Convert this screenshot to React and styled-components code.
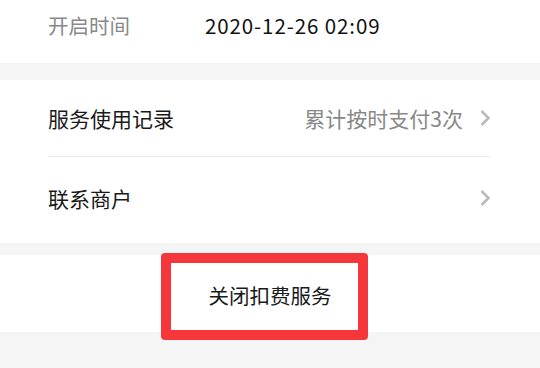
import React from "react";
import styled, { createGlobalStyle } from "styled-components";

const GlobalStyle = createGlobalStyle`
  html, body {
    margin: 0;
    padding: 0;
    background: #f5f5f5;
    font-family: "Noto Sans CJK SC", "Noto Sans", sans-serif;
  }
`;

const Page = styled.div`
  width: 540px;
  height: 368px;
  overflow: hidden;
  background: #f5f5f5;
`;

const Card = styled.div`
  background: #fff;
  padding: ${(p) => p.$pad || "0 48px"};
  margin-bottom: ${(p) => p.$gap || "0"};
`;

const InfoRow = styled.div`
  display: flex;
  align-items: center;
  height: 50px;
  padding-bottom: 13px;
  font-size: 20.5px;
`;

const Label = styled.span`
  width: 157px;
  color: #888;
`;

const Value = styled.span`
  color: #111;
  letter-spacing: 0.9px;
`;

const LinkRow = styled.div`
  display: flex;
  align-items: center;
  height: ${(p) => p.$h}px;
  font-size: 21px;
  color: #1a1a1a;
  border-bottom: ${(p) => (p.$divider ? "1px solid #ececec" : "none")};
`;

const Title = styled.span`
  flex: 1;
`;

const Extra = styled.span`
  color: #888;
  margin-right: 16px;
`;

const Chevron = () => (
  <svg width="12" height="18" viewBox="0 0 12 18">
    <path d="M2.5 2 L9.5 9 L2.5 16" fill="none" stroke="#bbb" strokeWidth="2.6" />
  </svg>
);

const ActionBar = styled.div`
  position: relative;
  background: #fff;
  height: 77px;
  margin-top: 12px;
  display: flex;
  align-items: center;
  justify-content: center;
`;

const ActionText = styled.span`
  font-size: 20.5px;
  color: #1a1a1a;
  margin-top: 2px;
`;

const Highlight = styled.div`
  position: absolute;
  left: 161px;
  top: -2px;
  width: 207px;
  height: 87px;
  box-sizing: border-box;
  border: 10px solid #f5363a;
  border-radius: 4px;
  pointer-events: none;
`;

export default function App() {
  return (
    <Page>
      <GlobalStyle />
      <Card $gap="17px">
        <InfoRow>
          <Label>开启时间</Label>
          <Value>2020-12-26 02:09</Value>
        </InfoRow>
      </Card>
      <Card $pad="0 49px 5px 48px">
        <LinkRow $h={76} $divider>
          <Title>服务使用记录</Title>
          <Extra>累计按时支付3次</Extra>
          <Chevron />
        </LinkRow>
        <LinkRow $h={81}>
          <Title>联系商户</Title>
          <Chevron />
        </LinkRow>
      </Card>
      <ActionBar>
        <ActionText>关闭扣费服务</ActionText>
        <Highlight />
      </ActionBar>
    </Page>
  );
}
